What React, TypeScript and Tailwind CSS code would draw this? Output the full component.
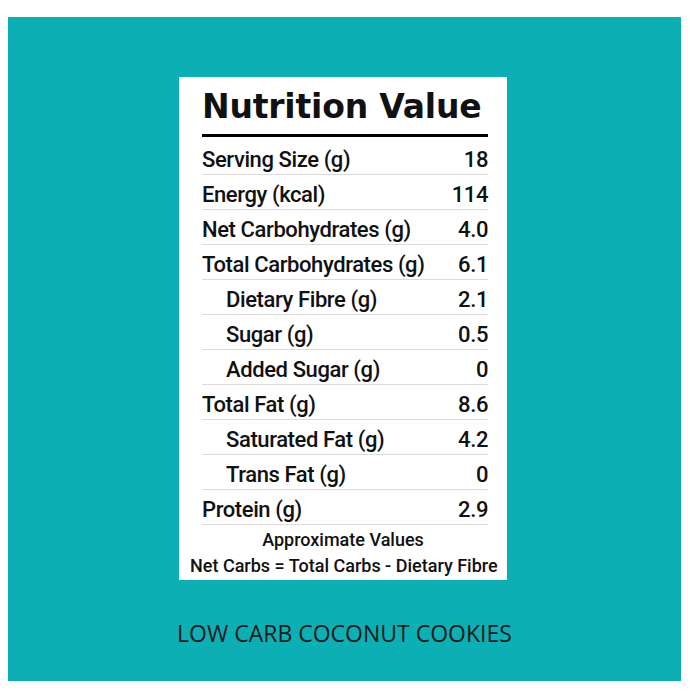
const rows: { label: string; value: string; indent?: boolean }[] = [
  { label: "Serving Size (g)", value: "18" },
  { label: "Energy (kcal)", value: "114" },
  { label: "Net Carbohydrates (g)", value: "4.0" },
  { label: "Total Carbohydrates (g)", value: "6.1" },
  { label: "Dietary Fibre (g)", value: "2.1", indent: true },
  { label: "Sugar (g)", value: "0.5", indent: true },
  { label: "Added Sugar (g)", value: "0", indent: true },
  { label: "Total Fat (g)", value: "8.6" },
  { label: "Saturated Fat (g)", value: "4.2", indent: true },
  { label: "Trans Fat (g)", value: "0", indent: true },
  { label: "Protein (g)", value: "2.9" },
]

export default function App() {
  return (
    <div className="w-[690px] h-[700px] bg-white pt-[17px] pl-[8px]">
      <div className="w-[673px] h-[664px] bg-[#0bafb4] flex flex-col">
        {/* Nutrition card */}
        <div className="ml-[171px] mt-[60px] w-[328px] h-[503px] bg-white pl-[23px] pr-[19px] pt-[14px] text-[#111]">
          <h1 className="font-['DejaVu_Sans',sans-serif] font-bold text-[33px] leading-[32px] tracking-[-0.2px] whitespace-nowrap">
            Nutrition Value
          </h1>
          <div className="mt-[11px] h-[3px] bg-black" />
          <div className="mt-[3px] font-['Roboto',sans-serif] font-medium text-[22px] tracking-[-0.4px]">
            {rows.map((r) => (
              <div
                key={r.label}
                className="h-[35px] border-b border-[#dcdcdc] flex justify-between pt-[7px] leading-[26px]"
              >
                <span className={r.indent ? "pl-[24px]" : ""}>{r.label}</span>
                <span>{r.value}</span>
              </div>
            ))}
          </div>
          <div className="mt-[2px] -ml-[12px] -mr-[8px] text-center font-['Roboto',sans-serif] font-medium text-[18px] leading-[26px] whitespace-nowrap">
            <p>Approximate Values</p>
            <p>Net Carbs = Total Carbs - Dietary Fibre</p>
          </div>
        </div>

        {/* Product name */}
        <p className="mt-[42px] text-center font-['Open_Sans',sans-serif] text-[23px] leading-[23px] text-[#1a1a1a]">
          LOW CARB COCONUT COOKIES
        </p>
      </div>
    </div>
  )
}
